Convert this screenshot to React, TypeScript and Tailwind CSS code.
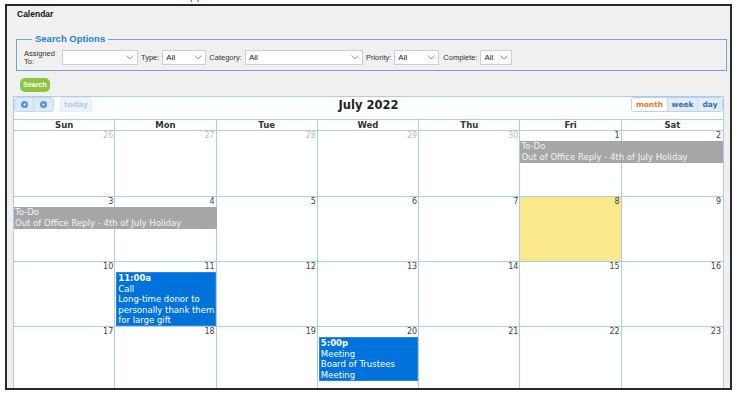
import React from "react";

const colStart: Record<number, string> = {
  1: "col-start-1",
  2: "col-start-2",
  3: "col-start-3",
  4: "col-start-4",
  5: "col-start-5",
  6: "col-start-6",
  7: "col-start-7",
};
const colSpan: Record<number, string> = { 1: "col-span-1", 2: "col-span-2" };

type CalEvent = {
  col: number;
  span: number;
  kind: "gray" | "blue";
  time?: string;
  lines: string[];
};

type WeekData = {
  days: number[];
  muted: number;
  today?: number;
  h: string;
  events: CalEvent[];
};

const weeks: WeekData[] = [
  {
    days: [26, 27, 28, 29, 30, 1, 2],
    muted: 5,
    h: "h-[66px]",
    events: [
      { col: 6, span: 2, kind: "gray", lines: ["To-Do", "Out of Office Reply - 4th of July Holiday"] },
    ],
  },
  {
    days: [3, 4, 5, 6, 7, 8, 9],
    muted: 0,
    today: 5,
    h: "h-[65px]",
    events: [
      { col: 1, span: 2, kind: "gray", lines: ["To-Do", "Out of Office Reply - 4th of July Holiday"] },
    ],
  },
  {
    days: [10, 11, 12, 13, 14, 15, 16],
    muted: 0,
    h: "h-[65px]",
    events: [
      {
        col: 2,
        span: 1,
        kind: "blue",
        time: "11:00a",
        lines: ["Call", "Long-time donor to", "personally thank them", "for large gift"],
      },
    ],
  },
  {
    days: [17, 18, 19, 20, 21, 22, 23],
    muted: 0,
    h: "h-[65px]",
    events: [
      { col: 4, span: 1, kind: "blue", time: "5:00p", lines: ["Meeting", "Board of Trustees", "Meeting"] },
    ],
  },
];

function Select({ w, value }: { w: string; value: string }) {
  return (
    <div className={`flex items-center h-[15px] bg-white border border-[#cfcfcf] ${w}`}>
      <span className="pl-[3px] text-[8px] text-[#222]">{value}</span>
      <svg className="ml-auto mr-[3px]" width="8" height="5" viewBox="0 0 8 5">
        <polyline points="0.5,0.5 4,4 7.5,0.5" fill="none" stroke="#8a8a8a" strokeWidth="0.8" />
      </svg>
    </div>
  );
}

function NavCircle({ dir }: { dir: "left" | "right" }) {
  return (
    <svg width="7" height="7" viewBox="0 0 7 7">
      <circle cx="3.5" cy="3.5" r="3.5" fill="#5b8fcf" />
      {dir === "left" ? (
        <polygon points="4.4,1.9 2.2,3.5 4.4,5.1" fill="#fff" />
      ) : (
        <polygon points="2.6,1.9 4.8,3.5 2.6,5.1" fill="#fff" />
      )}
    </svg>
  );
}

function Week({ w }: { w: WeekData }) {
  return (
    <div className={`grid grid-cols-7 grid-rows-[10px_auto_1fr] ${w.h} border-b border-[#a9cdee]`}>
      {w.days.map((d, i) => (
        <div
          key={"bg" + i}
          className={`${colStart[i + 1]} row-span-full ${i < 6 ? "border-r border-[#a9cdee]" : ""} ${
            w.today === i ? "bg-[#f9e98b]" : ""
          }`}
        />
      ))}
      {w.days.map((d, i) => (
        <div
          key={"n" + i}
          className={`${colStart[i + 1]} row-start-1 text-right pr-[2px] text-[8px] leading-[10px] ${
            i < w.muted ? "text-[#bdbdbd]" : "text-[#444]"
          }`}
        >
          {d}
        </div>
      ))}
      {w.events.map((e, i) =>
        e.kind === "gray" ? (
          <div
            key={"e" + i}
            className={`${colStart[e.col]} ${colSpan[e.span]} row-start-2 bg-[#a6a6a6] text-[#f4f4f4] px-[1px] pb-[1px] text-[8.5px] leading-[10.5px] whitespace-nowrap overflow-hidden`}
          >
            {e.lines.map((l) => (
              <div key={l}>{l}</div>
            ))}
          </div>
        ) : (
          <div
            key={"e" + i}
            className={`${colStart[e.col]} ${colSpan[e.span]} row-start-2 mx-[1px] bg-[#0072dc] border border-[#2a86e0] text-white px-[1px] text-[8.5px] leading-[10.5px] whitespace-nowrap overflow-hidden`}
          >
            <div className="font-bold">{e.time}</div>
            {e.lines.map((l, j) => (
              <div key={j}>{l}</div>
            ))}
          </div>
        )
      )}
    </div>
  );
}

export default function App() {
  return (
    <div className="w-[739px] h-[396px] bg-white overflow-hidden font-['Liberation_Sans',Arial,sans-serif]">
      <div className="h-[4px] overflow-hidden pl-[190px]">
        <span className="block -mt-[12px] text-[12px] leading-[14px] text-[#c8452b]">pp</span>
      </div>

      {/* Framed page */}
      <div className="ml-[5px] w-[727px] h-[386px] border-2 border-[#2a2a2a] bg-[#f0f0f0] overflow-hidden">
        <div className="pt-[2px] pl-[10px] h-[14px] text-[8.5px] leading-[12px] font-bold text-[#111]">Calendar</div>

        {/* Search options */}
        <fieldset className="mt-[13px] ml-[9px] w-[711px] border border-[#6aa6dc] px-[7px] pt-[5px] pb-[5px]">
          <legend className="ml-[8px] px-[3px] text-[9.5px] leading-[12px] font-bold text-[#2280d2]">
            Search Options
          </legend>
          <div className="flex items-center h-[15px] text-[7.5px] text-[#333]">
            <div className="w-[38px] leading-[8px]">
              Assigned
              <br />
              To:
            </div>
            <Select w="w-[76px]" value="" />
            <span className="ml-[3px]">Type:</span>
            <div className="ml-[3px]">
              <Select w="w-[44px]" value="All" />
            </div>
            <span className="ml-[3px]">Category:</span>
            <div className="ml-[3px]">
              <Select w="w-[118px]" value="All" />
            </div>
            <span className="ml-[3px]">Priority:</span>
            <div className="ml-[3px]">
              <Select w="w-[45px]" value="All" />
            </div>
            <span className="ml-[4px]">Complete:</span>
            <div className="ml-[3px]">
              <Select w="w-[32px]" value="All" />
            </div>
          </div>
        </fieldset>

        <button className="mt-[7px] ml-[13px] w-[30px] h-[14px] rounded-[5px] bg-[#8cc63f] text-white text-[7px] font-bold leading-[14px] block">
          Search
        </button>

        {/* Calendar */}
        <div className="mt-[4px] ml-[6px] w-[711px] border border-b-0 border-[#a9cdee] bg-white font-['DejaVu_Sans',Verdana,sans-serif]">
          <div className="flex items-start h-[22px]">
            <div className="flex-1 flex items-start">
              <div className="flex h-[15px] border border-[#c4d9ee] rounded-[3px] bg-[#dde9f6]">
                <div className="w-[19px] flex items-center justify-center border-r border-[#c4d9ee]">
                  <NavCircle dir="left" />
                </div>
                <div className="w-[19px] flex items-center justify-center">
                  <NavCircle dir="right" />
                </div>
              </div>
              <div className="ml-[6px] h-[15px] w-[32px] rounded-[3px] bg-[#eef4fb] border border-[#e3edf7] text-[7.5px] font-bold text-[#b9cbe0] flex items-center justify-center">
                today
              </div>
            </div>
            <div className="text-[11.5px] leading-[15px] font-bold text-[#222] pt-[1px]">July 2022</div>
            <div className="flex-1 flex justify-end">
              <div className="flex h-[15px] border border-[#b9d3ee] rounded-[3px] text-[7.5px] font-bold">
                <div className="w-[36px] bg-white flex items-center justify-center text-[#e67a2c] rounded-l-[3px] border-r border-[#c9dcf0]">
                  month
                </div>
                <div className="w-[30px] bg-[#e1ecf8] flex items-center justify-center text-[#3a6ea5] border-r border-[#c9dcf0]">
                  week
                </div>
                <div className="w-[24px] bg-[#e1ecf8] flex items-center justify-center text-[#3a6ea5] rounded-r-[3px]">
                  day
                </div>
              </div>
            </div>
          </div>

          {/* Weekday header */}
          <div className="grid grid-cols-7 h-[12px] border-y border-[#a9cdee]">
            {["Sun", "Mon", "Tue", "Wed", "Thu", "Fri", "Sat"].map((d, i) => (
              <div
                key={d}
                className={`text-center text-[8.5px] leading-[10px] font-bold text-[#333] ${
                  i < 6 ? "border-r border-[#a9cdee]" : ""
                }`}
              >
                {d}
              </div>
            ))}
          </div>

          {weeks.map((w, i) => (
            <Week key={i} w={w} />
          ))}
        </div>
      </div>
    </div>
  );
}
